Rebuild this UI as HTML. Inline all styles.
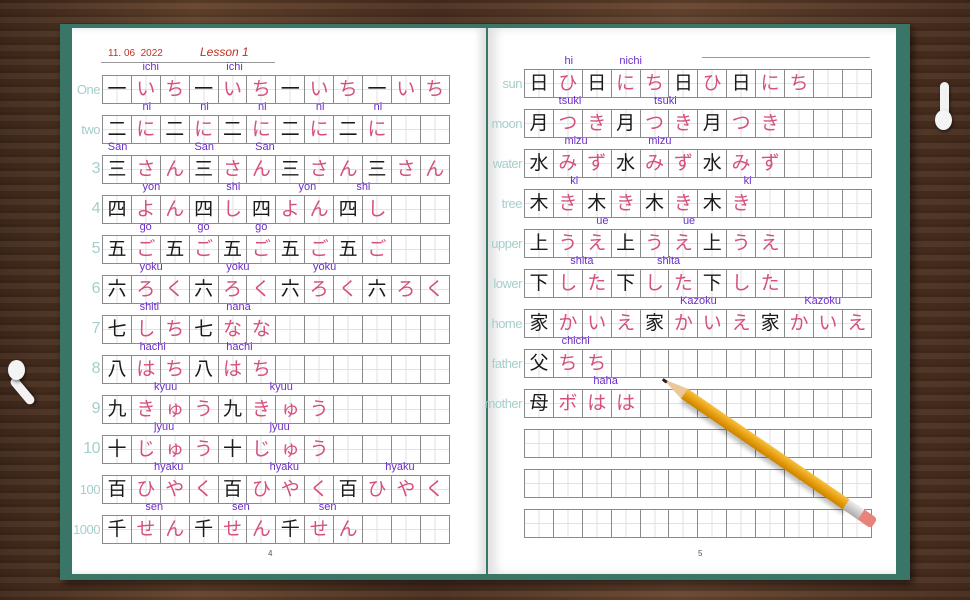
<!DOCTYPE html>
<html><head><meta charset="utf-8"><style>
*{margin:0;padding:0;box-sizing:border-box}
body{width:970px;height:600px;overflow:hidden;position:relative;background:linear-gradient(90deg,#3f281a 0%,#64432c 20%,#4a2f1f 45%,#684630 70%,#452b1c 100%);font-family:"Liberation Sans","Noto Sans CJK JP",sans-serif}
.wood{position:absolute;inset:0;background:repeating-linear-gradient(180deg,rgba(0,0,0,.14) 0 3px,rgba(255,255,255,.04) 3px 9px,rgba(0,0,0,.08) 9px 14px)}
#cover{position:absolute;left:60px;top:24px;width:850px;height:556px;background:#3a7668;box-shadow:3px 4px 8px rgba(0,0,0,.6)}
.page{position:absolute;top:28px;height:546px;background:#fff}
#lp{left:72px;width:414px;box-shadow:inset -6px 0 8px rgba(0,0,0,.12)}
#rp{left:488px;width:408px;box-shadow:inset 8px 0 10px rgba(0,0,0,.12)}
.row{position:absolute;height:29px;display:flex;border:1px solid #8a8a8a;border-right:none}
.c{width:28.9px;height:27px;border-right:1px solid #8a8a8a;position:relative;font-size:19px;line-height:27px;text-align:center;color:#1a1a1a;
background:linear-gradient(90deg,transparent 13.5px,#e2e2e2 13.5px,#e2e2e2 14.3px,transparent 14.3px),linear-gradient(180deg,transparent 13px,#e2e2e2 13px,#e2e2e2 13.8px,transparent 13.8px)}
.p{color:#d4507f}
.lab{position:absolute;color:#a3cfcc;font-size:13px;text-align:right;width:40px;letter-spacing:-.5px}
.lab.n{font-size:16px}
.ro{position:absolute;color:#6b2fc6;font-size:11px}
.pn{position:absolute;font-size:8px;color:#555;top:549px}
</style></head><body>
<div class="wood"></div>
<div id="cover"></div>
<div class="page" id="lp"></div>
<div class="page" id="rp"></div>
<div style="position:absolute;left:108px;top:48px;color:#c03020;font-size:10px">11. 06 &nbsp;2022</div>
<div style="position:absolute;left:200px;top:45px;color:#c03020;font-size:12px;font-style:italic">Lesson 1</div>
<div style="position:absolute;left:101px;top:62px;width:174px;height:1px;background:#999"></div>
<div style="position:absolute;left:702px;top:57px;width:168px;height:1px;background:#999"></div>
<div class="pn" style="left:268px">4</div>
<div class="pn" style="left:698px">5</div>
<div id="g"></div>
<div style="position:absolute;left:663px;top:373px;width:262px;height:12px;transform-origin:0 50%;transform:rotate(34.4deg);">
 <div style="position:absolute;left:0;top:0;width:0;height:0;border-top:6px solid transparent;border-bottom:6px solid transparent;border-right:26px solid #e9c89a"></div>
 <div style="position:absolute;left:0;top:4.5px;width:5px;height:3px;background:#222"></div>
 <div style="position:absolute;left:26px;top:0;width:196px;height:12px;background:linear-gradient(180deg,#f7c040,#e8a010 50%,#c98200);box-shadow:2px 4px 4px rgba(0,0,0,.25)"></div>
 <div style="position:absolute;left:222px;top:0;width:18px;height:12px;background:linear-gradient(180deg,#eee,#aaa)"></div>
 <div style="position:absolute;left:240px;top:0;width:16px;height:12px;border-radius:0 4px 4px 0;background:#e8837b"></div>
</div>
<div style="position:absolute;left:18px;top:375px;width:9px;height:32px;background:#f2f2f2;border-radius:5px;transform:rotate(-40deg);box-shadow:1px 2px 3px rgba(0,0,0,.5)"></div>
<div style="position:absolute;left:8px;top:360px;width:17px;height:20px;background:#f4f4f4;border-radius:50%;box-shadow:1px 2px 3px rgba(0,0,0,.5)"></div>
<div style="position:absolute;left:940px;top:82px;width:9px;height:34px;background:#f2f2f2;border-radius:5px;box-shadow:1px 2px 3px rgba(0,0,0,.5)"></div>
<div style="position:absolute;left:935px;top:110px;width:17px;height:20px;background:#f4f4f4;border-radius:50%;box-shadow:1px 2px 3px rgba(0,0,0,.5)"></div>
<script>
var K="一二三四五六七八九十百千日月水木上下家父母";
function build(x,y0,rows,labels,ro){
 var h="";
 for(var i=0;i<12;i++){
  var y=y0+i*40,s=rows[i]||"";
  h+='<div class="row" style="left:'+x+'px;top:'+y+'px">';
  for(var j=0;j<12;j++){var ch=s[j]||"";h+='<div class="c'+(ch&&K.indexOf(ch)<0?' p':'')+'">'+ch+'</div>';}
  h+='</div>';
  if(labels[i]){var n=/^[0-9]$/.test(labels[i])||labels[i]=="10";h+='<div class="lab'+(n?' n':'')+'" style="left:'+(x-42)+'px;top:'+(y+(n?5:7))+'px">'+labels[i]+'</div>';}
  (ro[i]||[]).forEach(function(r){h+='<div class="ro" style="left:'+(x+r[0]*28.9)+'px;top:'+(y-14)+'px">'+r[1]+'</div>';});
 }
 return h;
}
var L=["一いち一いち一いち一いち","二に二に二に二に二に","三さん三さん三さん三さん","四よん四し四よん四し","五ご五ご五ご五ご五ご","六ろく六ろく六ろく六ろく","七しち七なな","八はち八はち","九きゅう九きゅう","十じゅう十じゅう","百ひやく百ひやく百ひやく","千せん千せん千せん"];
var LL=["One","two","3","4","5","6","7","8","9","10","100","1000"];
var LR=[[[1.4,"ichi"],[4.3,"ichi"]],[[1.4,"ni"],[3.4,"ni"],[5.4,"ni"],[7.4,"ni"],[9.4,"ni"]],[[0.2,"San"],[3.2,"San"],[5.3,"San"]],[[1.4,"yon"],[4.3,"shi"],[6.8,"yon"],[8.8,"shi"]],[[1.3,"go"],[3.3,"go"],[5.3,"go"]],[[1.3,"yoku"],[4.3,"yoku"],[7.3,"yoku"]],[[1.3,"shiti"],[4.3,"nana"]],[[1.3,"hachi"],[4.3,"hachi"]],[[1.8,"kyuu"],[5.8,"kyuu"]],[[1.8,"jyuu"],[5.8,"jyuu"]],[[1.8,"hyaku"],[5.8,"hyaku"],[9.8,"hyaku"]],[[1.5,"sen"],[4.5,"sen"],[7.5,"sen"]]];
var R=["日ひ日にち日ひ日にち","月つき月つき月つき","水みず水みず水みず","木き木き木き木き","上うえ上うえ上うえ","下した下した下した","家かいえ家かいえ家かいえ","父ちち","母ボはは","","",""];
var RL=["sun","moon","water","tree","upper","lower","home","father","mother"];
var RR=[[[1.4,"hi"],[3.3,"nichi"]],[[1.2,"tsuki"],[4.5,"tsuki"]],[[1.4,"mizu"],[4.3,"mizu"]],[[1.6,"ki"],[7.6,"ki"]],[[2.5,"ue"],[5.5,"ue"]],[[1.6,"shita"],[4.6,"shita"]],[[5.4,"Kazoku"],[9.7,"Kazoku"]],[[1.3,"chichi"]],[[2.4,"haha"]]];
document.getElementById("g").innerHTML=build(102,75,L,LL,LR)+build(524,69,R,RL,RR);
</script>
</body></html>
